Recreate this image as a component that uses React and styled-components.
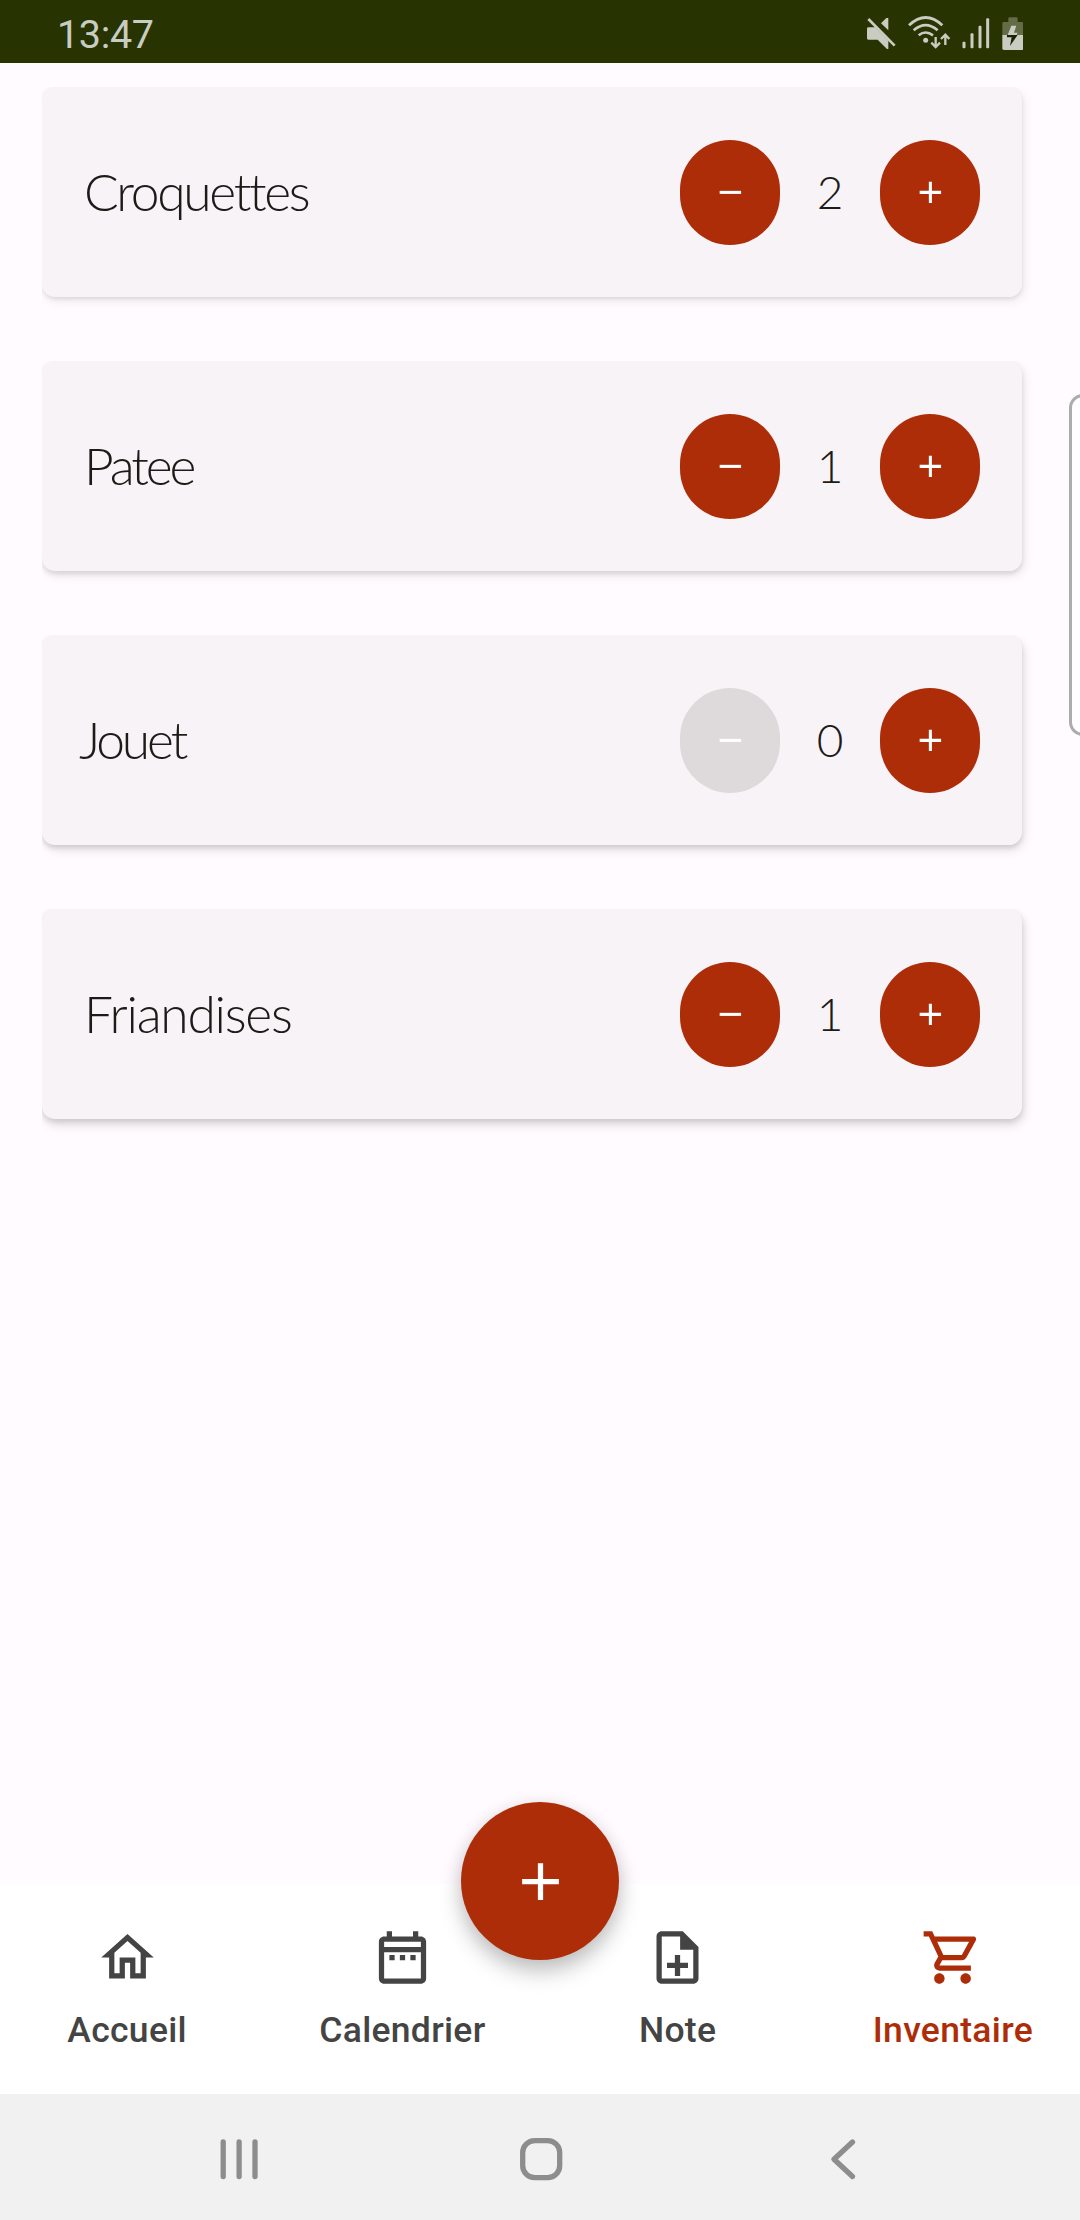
import React from 'react';
import styled, { createGlobalStyle, css } from 'styled-components';

const GlobalStyle = createGlobalStyle`
  * { box-sizing: border-box; }
  body { margin: 0; background: #fffbff; }
`;

const Screen = styled.div`
  width: 1080px;
  height: 2220px;
  display: flex;
  flex-direction: column;
  position: relative;
  overflow: hidden;
  background: #fffbff;
  font-family: Roboto, sans-serif;
`;

const StatusBar = styled.header`
  flex: 0 0 63px;
  display: flex;
  align-items: center;
  justify-content: space-between;
  padding: 4px 57px 0 57px;
  background: #283302;
  color: #c9ccc0;
`;

const Clock = styled.span`
  padding-top: 2px;
  font-size: 39.5px;
  line-height: 46px;
  letter-spacing: -0.35px;
`;

const StatusIcons = styled.div`
  display: flex;
  gap: 12px;
`;

const StatusGlyph = styled.svg`
  display: block;
  height: 35px;
  width: ${(p) => p.$width}px;
  fill: #c9ccc0;
`;

const List = styled.main`
  flex: 1;
  display: flex;
  flex-direction: column;
  gap: 64px;
  padding: 24px 58px 0 42px;
`;

const CardClip = styled.div`
  clip-path: inset(0 -30px -30px 0);
`;

const shadows = [
  '0 2px 4px rgba(0,0,0,.09), 2px 4px 12px rgba(0,0,0,.08)',
  '0 3px 5px rgba(0,0,0,.10), 2px 4px 12px rgba(0,0,0,.09)',
  '0 3px 5px rgba(0,0,0,.12), 2px 5px 12px rgba(0,0,0,.10)',
  '0 3px 6px rgba(0,0,0,.13), 2px 6px 12px rgba(0,0,0,.11)',
];

const Card = styled.article`
  height: 210px;
  display: flex;
  align-items: center;
  justify-content: space-between;
  padding: 0 42px;
  border-radius: 13px;
  background: #f7f3f7;
  box-shadow: ${(p) => shadows[p.$depth]};
`;

const ItemName = styled.h2`
  margin: 0 0 2px ${(p) => p.$indent || 0}px;
  font: 300 51.5px/64px Lato, sans-serif;
  letter-spacing: ${(p) => p.$tracking}px;
  color: #1d1a18;
`;

const Stepper = styled.div`
  display: flex;
  align-items: center;
`;

const RoundButton = styled.button`
  width: 100px;
  height: 105px;
  padding: 0;
  border: 0;
  border-radius: 50px;
  display: flex;
  align-items: center;
  justify-content: center;
  color: #fff;
  background: #ae2d09;
  ${(p) =>
    p.disabled &&
    css`
      background: #ded9da;
    `}
`;

const Count = styled.span`
  width: 100px;
  text-align: center;
  font: 300 46px/56px Lato, sans-serif;
  color: #1d1a18;
`;

const MaterialSvg = styled.svg`
  display: block;
  width: ${(p) => p.$size}px;
  height: ${(p) => p.$size}px;
  fill: currentColor;
`;

const TabBar = styled.nav`
  flex: 0 0 210px;
  position: relative;
  display: grid;
  grid-template-columns: repeat(4, 1fr);
  column-gap: 21px;
  background: #fff;
`;

const Tab = styled.a`
  display: flex;
  flex-direction: column;
  align-items: center;
  padding-top: 42px;
  gap: 20px;
  color: ${(p) => (p.$active ? '#ae2d09' : '#444')};
`;

const TabLabel = styled.span`
  font-size: 35.5px;
  line-height: 42px;
  font-weight: 500;
  letter-spacing: 0.3px;
  white-space: nowrap;
`;

const Fab = styled.button`
  position: absolute;
  left: 461px;
  top: -82px;
  width: 158px;
  height: 158px;
  padding: 0 0 0 1px;
  border: 0;
  border-radius: 50%;
  display: flex;
  align-items: center;
  justify-content: center;
  color: #fff;
  background: #ae2d09;
  box-shadow: 0 12px 22px rgba(0, 0, 0, 0.22), 0 2px 18px rgba(0, 0, 0, 0.08);
`;

const SystemBar = styled.footer`
  flex: 0 0 126px;
  display: flex;
  align-items: center;
  justify-content: space-between;
  padding: 4px 210px 0 212px;
  background: #f1f1f1;
`;

const SystemGlyph = styled.svg`
  display: block;
  width: 54px;
  height: 54px;
  fill: none;
  stroke: #8d8d8d;
  stroke-width: 5.3;
  stroke-linecap: round;
  stroke-linejoin: round;
`;

const EdgeHandle = styled.div`
  position: absolute;
  left: 1069px;
  top: 394px;
  width: 30px;
  height: 342px;
  border: 3px solid #acacac;
  border-radius: 14px;
  background: #fffdff;
`;

const paths = {
  minus: 'M19 13H5v-2h14v2z',
  plus: 'M19 13h-6v6h-2v-6H5v-2h6V5h2v6h6v2z',
  home: 'M12 5.69l5 4.5V18h-2v-6H9v6H7v-7.81l5-4.5M12 3L2 12h3v8h6v-6h2v6h6v-8h3L12 3z',
  calendar:
    'M19 4h-1V2h-2v2H8V2H6v2H5c-1.1 0-2 .9-2 2v14c0 1.1.9 2 2 2h14c1.1 0 2-.9 2-2V6c0-1.1-.9-2-2-2zm0 16H5V10h14v10zm0-12H5V6h14v2zM9 13H7v-2h2v2zm4 0h-2v-2h2v2zm4 0h-2v-2h2v2z',
  note: 'M14 2H6c-1.1 0-2 .9-2 2v16c0 1.1.9 2 2 2h12c1.1 0 2-.9 2-2V8l-6-6zm4 18H6V4h7v5h5v11zm-7-1h2v-3h3v-2h-3v-3h-2v3H8v2h3v3z',
  cart: 'M15.55 13c.75 0 1.41-.41 1.75-1.03l3.58-6.49c.37-.66-.11-1.48-.87-1.48H5.21l-.94-2H1v2h2l3.6 7.59-1.35 2.44C4.52 15.37 5.48 17 7 17h12v-2H7l1.1-2h7.45zM6.16 6h12.15l-2.76 5H8.53L6.16 6zM7 18c-1.1 0-1.99.9-1.99 2S5.9 22 7 22s2-.9 2-2-.9-2-2-2zm10 0c-1.1 0-1.99.9-1.99 2s.89 2 1.99 2 2-.9 2-2-.9-2-2-2z',
};

const Icon = ({ name, size }) => (
  <MaterialSvg viewBox="0 0 24 24" $size={size} aria-hidden="true">
    <path d={paths[name]} />
  </MaterialSvg>
);

const items = [
  { name: 'Croquettes', count: 2, tracking: -2.3 },
  { name: 'Patee', count: 1, tracking: -3.1 },
  { name: 'Jouet', count: 0, tracking: -3.1, indent: -5 },
  { name: 'Friandises', count: 1, tracking: -1.25 },
];

const tabs = [
  { label: 'Accueil', icon: 'home' },
  { label: 'Calendrier', icon: 'calendar' },
  { label: 'Note', icon: 'note' },
  { label: 'Inventaire', icon: 'cart', active: true },
];

const MuteIcon = () => (
  <StatusGlyph viewBox="80 45 87 105" $width={29}>
    <path d="M122 67L138 51h6v37z" />
    <path d="M84 79h20l40 40v25h-4l-28-28H84q-4 0-4-4V83q0-4 4-4z" />
    <path d="M90 49L168 127" stroke="#283302" strokeWidth="6" fill="none" />
    <path d="M84 54L163 134" stroke="#c9ccc0" strokeWidth="8" fill="none" />
  </StatusGlyph>
);

const WifiIcon = () => (
  <StatusGlyph viewBox="203 45 126 105" $width={42}>
    <g fill="none" stroke="#c9ccc0" strokeWidth="8">
      <path d="M206 73Q256 26 306 73" />
      <path d="M220 88Q256 57 292 88" />
      <path d="M235 103Q256 86 278 103" />
      <path d="M286 108v29M273 125l13 13 13-13" strokeWidth="7" />
      <path d="M315 132v-30M302 114l13-13 12 13" strokeWidth="7" />
    </g>
    <circle cx="256" cy="118" r="7.5" />
  </StatusGlyph>
);

const SignalIcon = () => (
  <StatusGlyph viewBox="362 45 83 105" $width={28}>
    <rect x="363" y="122" width="9" height="20" rx="3" />
    <rect x="387" y="97" width="9" height="45" rx="3" />
    <rect x="411" y="74" width="9" height="68" rx="3" />
    <rect x="434" y="52" width="9" height="90" rx="3" />
  </StatusGlyph>
);

const BatteryIcon = () => (
  <StatusGlyph viewBox="485 45 64 105" $width={21.3}>
    <path d="M486 102V67q0-4 4-4h14V53q0-4 4-4h20q4 0 4 4v10h13q4 0 4 4v35z" fill="#636b47" />
    <path d="M486 102h63v40q0 5-5 5h-53q-5 0-5-5z" />
    <path d="M513 74h15l-7 21h11l-3 7h-27z" />
    <path d="M500 102h32l-23 33 5-26h-14z" fill="#1d2206" />
  </StatusGlyph>
);

export default function App() {
  return (
    <Screen>
      <GlobalStyle />
      <StatusBar>
        <Clock>13:47</Clock>
        <StatusIcons>
          <MuteIcon />
          <WifiIcon />
          <SignalIcon />
          <BatteryIcon />
        </StatusIcons>
      </StatusBar>

      <List>
        {items.map((item, i) => (
          <CardClip key={item.name}>
            <Card $depth={i}>
              <ItemName $tracking={item.tracking} $indent={item.indent}>
                {item.name}
              </ItemName>
              <Stepper>
                <RoundButton disabled={item.count === 0}>
                  <Icon name="minus" size={36.75} />
                </RoundButton>
                <Count>{item.count}</Count>
                <RoundButton>
                  <Icon name="plus" size={36.75} />
                </RoundButton>
              </Stepper>
            </Card>
          </CardClip>
        ))}
      </List>

      <TabBar>
        {tabs.map((tab) => (
          <Tab key={tab.label} $active={tab.active}>
            <Icon name={tab.icon} size={63} />
            <TabLabel>{tab.label}</TabLabel>
          </Tab>
        ))}
        <Fab>
          <Icon name="plus" size={63} />
        </Fab>
      </TabBar>

      <SystemBar>
        <SystemGlyph viewBox="0 0 54 54">
          <path d="M11.2 10v34.5M27.1 10v34.5M43 10v34.5" />
        </SystemGlyph>
        <SystemGlyph viewBox="0 0 54 54">
          <rect x="8.7" y="8.7" width="37" height="37" rx="12" />
        </SystemGlyph>
        <SystemGlyph viewBox="0 0 54 54">
          <path d="M36.5 10L18 27.2 36.5 44.5" />
        </SystemGlyph>
      </SystemBar>
      <EdgeHandle />
    </Screen>
  );
}
